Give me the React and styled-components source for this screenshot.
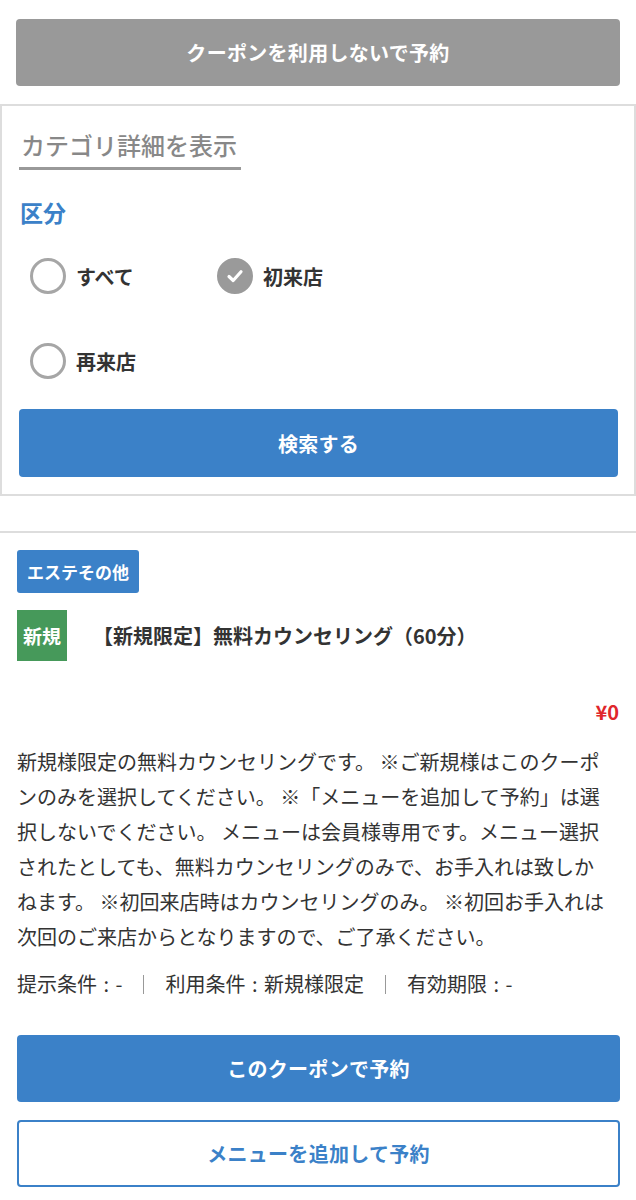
import React from "react";
import styled, { createGlobalStyle } from "styled-components";

const Global = createGlobalStyle`
  html, body { margin: 0; padding: 0; background: #fff; }
  body {
    font-family: "Noto Sans CJK JP", "Noto Sans", sans-serif;
    color: #333;
    -webkit-font-smoothing: antialiased;
  }
  * { box-sizing: border-box; }
`;

const BLUE = "#3b81c8";

const Page = styled.div`
  width: 636px;
`;

const TopArea = styled.div`
  padding: 19px 16px 18px;
`;

const Button = styled.button`
  display: flex;
  align-items: center;
  justify-content: center;
  width: 100%;
  height: ${(p) => p.$h || 67}px;
  border-radius: 4px;
  font-family: inherit;
  font-size: 20px;
  font-weight: 700;
  letter-spacing: 0.3px;
  cursor: pointer;
  background: ${(p) => (p.$variant === "grey" ? "#999" : p.$variant === "outline" ? "#fff" : BLUE)};
  color: ${(p) => (p.$variant === "outline" ? BLUE : "#fff")};
  border: ${(p) => (p.$variant === "outline" ? `2px solid ${BLUE}` : "none")};
`;

const Panel = styled.section`
  border: 2px solid #ddd;
  padding: 24px 16px 17px 17px;
`;

const TabTitle = styled.div`
  display: inline-block;
  font-size: 24px;
  line-height: 30px;
  font-weight: 500;
  color: #888;
  padding: 0 4px 7px 2px;
  border-bottom: 3px solid #999;
`;

const GroupLabel = styled.div`
  margin-top: 27px;
  font-size: 23px;
  line-height: 30px;
  font-weight: 700;
  color: ${BLUE};
  padding-left: 1px;
`;

const OptionGrid = styled.div`
  display: grid;
  grid-template-columns: 187px 187px;
  row-gap: 49px;
  margin-top: 31px;
  padding-left: 11px;
`;

const Option = styled.label`
  display: flex;
  align-items: center;
  gap: 10px;
  height: 36px;
  font-size: 20px;
  font-weight: 700;
  color: #333;
`;

const Radio = styled.span`
  display: flex;
  align-items: center;
  justify-content: center;
  width: 36px;
  height: 36px;
  border-radius: 50%;
  border: 3px solid ${(p) => (p.$checked ? "#9a9a9a" : "#a6a6a6")};
  background: ${(p) => (p.$checked ? "#9a9a9a" : "#fff")};
  flex: none;
`;

const SearchWrap = styled.div`
  margin-top: 30px;
`;

const Divider = styled.hr`
  margin: 35px 0 0;
  border: none;
  border-top: 2px solid #ddd;
`;

const Coupon = styled.article`
  padding: 17px 16px 20px 17px;
`;

const Category = styled.span`
  display: inline-flex;
  align-items: center;
  height: 43px;
  padding: 0 10px;
  background: ${BLUE};
  color: #fff;
  font-size: 17px;
  font-weight: 700;
  border-radius: 3px;
`;

const TitleRow = styled.div`
  display: flex;
  align-items: center;
  gap: 26px;
  margin-top: 17px;
`;

const NewTag = styled.span`
  display: flex;
  align-items: center;
  justify-content: center;
  width: 50px;
  height: 51px;
  background: #46995a;
  color: #fff;
  font-size: 19px;
  font-weight: 700;
  flex: none;
`;

const Title = styled.h2`
  margin: 0;
  font-size: 20px;
  font-weight: 700;
  color: #333;
`;

const Price = styled.div`
  margin-top: 38px;
  text-align: right;
  font-size: 20px;
  font-weight: 700;
  color: #e0262b;
  padding-right: 1px;
  line-height: 26px;
`;

const Description = styled.p`
  margin: 19px 0 0;
  font-size: 20px;
  line-height: 35px;
  color: #333;
  width: 601px;
`;

const Meta = styled.div`
  margin: 17px 0 0;
  font-size: 20px;
  line-height: 26px;
  color: #333;
  display: flex;
  align-items: center;
  gap: 21px;
`;

const MetaItem = styled.span`
  word-spacing: 2px;
`;

const Sep = styled.span`
  width: 0;
  height: 19px;
  border-left: 1px solid #999;
`;

const Actions = styled.div`
  display: flex;
  flex-direction: column;
  gap: 18px;
  margin-top: 38px;
`;

const Check = () => (
  <svg width="20" height="20" viewBox="0 0 20 20">
    <path d="M4 10.5 L8.2 14.5 L16 5.8" fill="none" stroke="#fff" strokeWidth="3.2" strokeLinecap="round" strokeLinejoin="round" />
  </svg>
);

const options = [
  { label: "すべて", checked: false },
  { label: "初来店", checked: true },
  { label: "再来店", checked: false },
];

const descLines = [
  "新規様限定の無料カウンセリングです。 ※ご新規様はこのクーポ",
  "ンのみを選択してください。 ※「メニューを追加して予約」は選",
  "択しないでください。 メニューは会員様専用です。メニュー選択",
  "されたとしても、無料カウンセリングのみで、お手入れは致しか",
  "ねます。 ※初回来店時はカウンセリングのみ。 ※初回お手入れは",
  "次回のご来店からとなりますので、ご了承ください。",
];

export default function App() {
  return (
    <Page>
      <Global />
      <TopArea>
        <Button $variant="grey">クーポンを利用しないで予約</Button>
      </TopArea>
      <Panel>
        <TabTitle>カテゴリ詳細を表示</TabTitle>
        <GroupLabel>区分</GroupLabel>
        <OptionGrid>
          {options.map((o) => (
            <Option key={o.label}>
              <Radio $checked={o.checked}>{o.checked && <Check />}</Radio>
              {o.label}
            </Option>
          ))}
        </OptionGrid>
        <SearchWrap>
          <Button $h={68}>検索する</Button>
        </SearchWrap>
      </Panel>
      <Divider />
      <Coupon>
        <Category>エステその他</Category>
        <TitleRow>
          <NewTag>新規</NewTag>
          <Title>【新規限定】無料カウンセリング（60分）</Title>
        </TitleRow>
        <Price>¥0</Price>
        <Description>
          {descLines.map((l, i) => (
            <React.Fragment key={i}>
              {l}
              {i < descLines.length - 1 && <br />}
            </React.Fragment>
          ))}
        </Description>
        <Meta>
          <MetaItem>提示条件 : -</MetaItem>
          <Sep />
          <MetaItem>利用条件 : 新規様限定</MetaItem>
          <Sep />
          <MetaItem>有効期限 : -</MetaItem>
        </Meta>
        <Actions>
          <Button>このクーポンで予約</Button>
          <Button $variant="outline">メニューを追加して予約</Button>
        </Actions>
      </Coupon>
    </Page>
  );
}
